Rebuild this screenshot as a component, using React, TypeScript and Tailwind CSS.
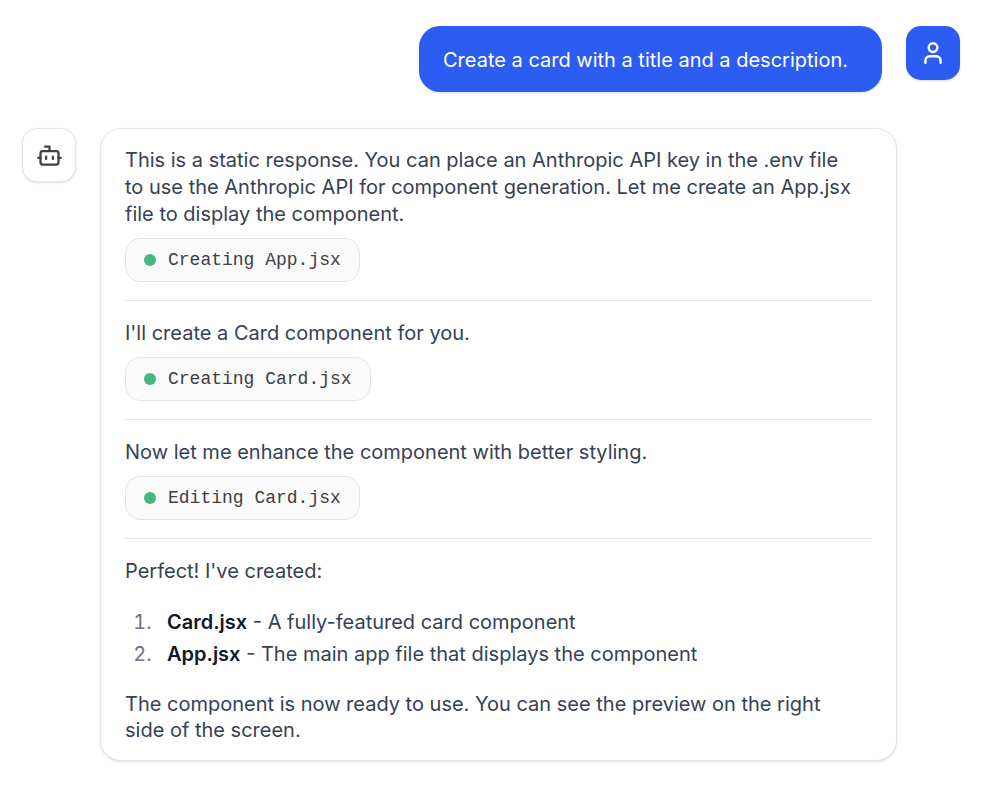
import { Bot, User } from "lucide-react";

type Step = { text: string; tool: string };

const steps: Step[] = [
  {
    text: "This is a static response. You can place an Anthropic API key in the .env file to use the Anthropic API for component generation. Let me create an App.jsx file to display the component.",
    tool: "Creating App.jsx",
  },
  { text: "I'll create a Card component for you.", tool: "Creating Card.jsx" },
  { text: "Now let me enhance the component with better styling.", tool: "Editing Card.jsx" },
];

const files = [
  { name: "Card.jsx", note: "A fully-featured card component" },
  { name: "App.jsx", note: "The main app file that displays the component" },
];

function ToolBadge({ label }: { label: string }) {
  return (
    <div className="mt-2.5 inline-flex h-11 items-center gap-3 rounded-[15px] border border-neutral-200 bg-neutral-50 px-[18px] font-['Liberation_Mono',monospace] text-lg text-neutral-700">
      <span className="size-3 rounded-full bg-[#44b97f]" />
      <span>{label}</span>
    </div>
  );
}

export default function App() {
  return (
    <main className="flex flex-col gap-9 bg-white pt-[26px] pr-[42px] pb-9 pl-[22px] font-[Inter,sans-serif] text-xl text-[#364153]">
      <div className="flex items-start justify-end gap-6">
        <div className="min-w-[463px] rounded-[21px] bg-[#2c5cf2] px-6 pt-[19px] pb-[17px] leading-[30px] text-white shadow-sm">
          Create a card with a title and a description.
        </div>
        <div className="flex size-[54px] shrink-0 items-center justify-center rounded-[15px] bg-[#2c5cf2] text-white shadow-sm">
          <User className="size-[26px]" strokeWidth={2.25} />
        </div>
      </div>

      <div className="flex items-start gap-6">
        <div className="flex size-[54px] shrink-0 items-center justify-center rounded-[15px] border border-neutral-200 bg-white text-neutral-700 shadow-sm">
          <Bot className="size-[27px]" />
        </div>
        <div className="mr-[63px] min-w-0 flex-1 rounded-[21px] border border-neutral-200 bg-white px-6 pt-[18px] pb-[17px] leading-[27px] shadow-sm">
          {steps.map((step) => (
            <section key={step.tool} className="mb-[19px] border-b border-neutral-200 pb-[18px]">
              <p className="pr-4">{step.text}</p>
              <ToolBadge label={step.tool} />
            </section>
          ))}
          <p>Perfect! I've created:</p>
          <ol className="mt-6 mb-[23px] list-decimal space-y-[5px] pl-8 marker:text-[#6a7282]">
            {files.map((file) => (
              <li key={file.name} className="pl-2.5">
                <strong className="font-semibold text-[#101828]">{file.name}</strong> - {file.note}
              </li>
            ))}
          </ol>
          <p className="pr-4 leading-[26px]">
            The component is now ready to use. You can see the preview on the right side of the screen.
          </p>
        </div>
      </div>
    </main>
  );
}
